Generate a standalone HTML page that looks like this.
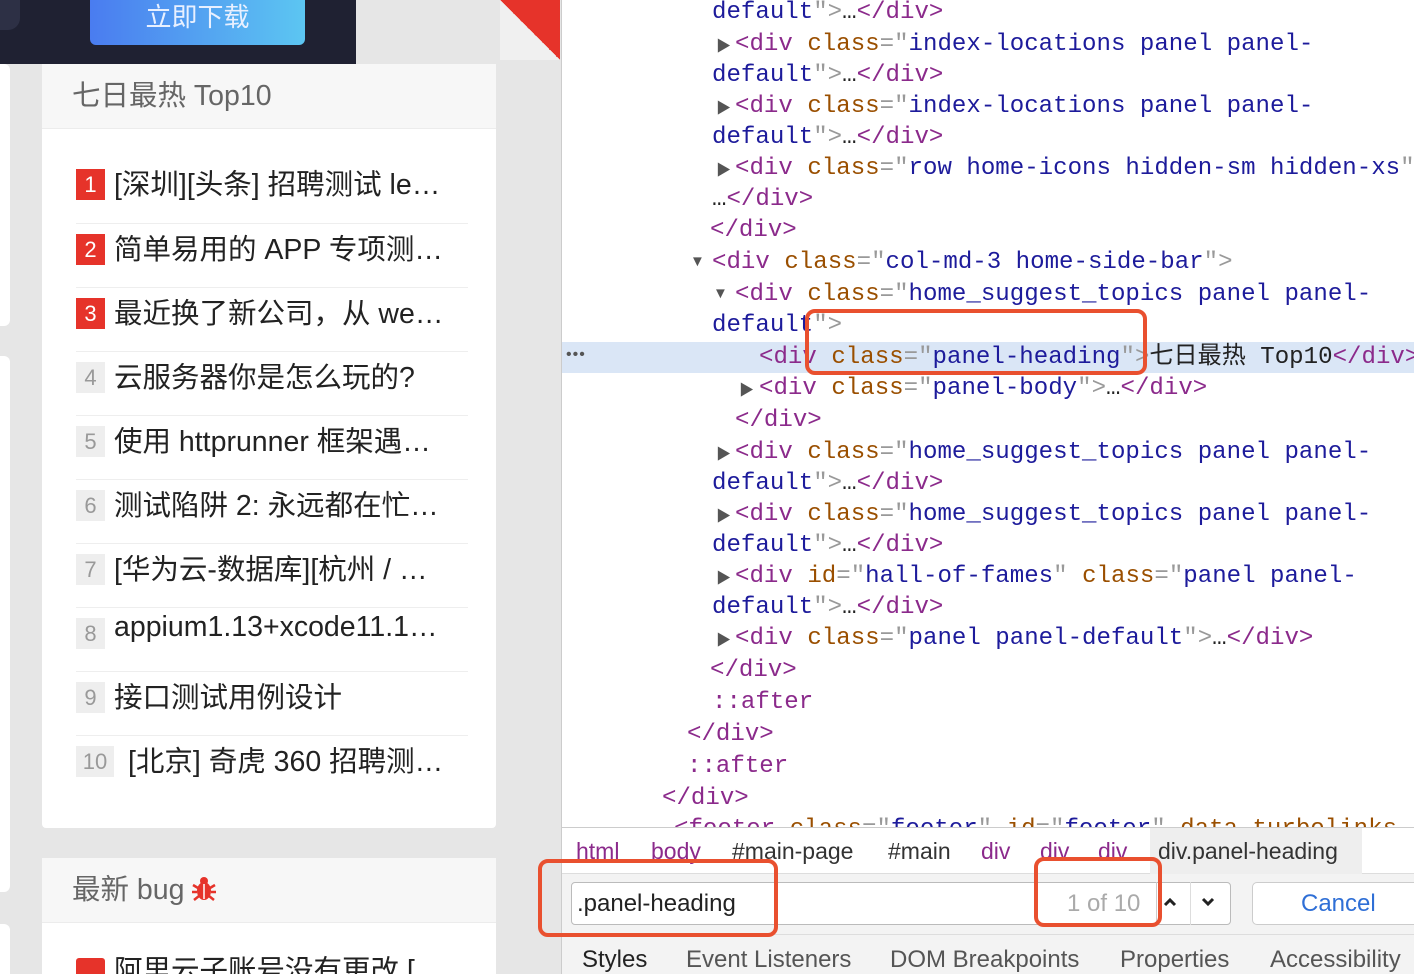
<!DOCTYPE html>
<html style="height:974px;overflow:hidden"><head><meta charset="utf-8"><style>
*{margin:0;padding:0;box-sizing:border-box}
body{width:1414px;height:974px;overflow:hidden;background:#e6e6e6;position:relative;font-family:"Liberation Sans","Noto Sans CJK SC",sans-serif}
.abs{position:absolute}
.top{left:0;top:0;width:356px;height:64px;background:#1f2132}
.btn{left:90px;top:0;width:215px;height:45px;border-radius:0 0 6px 6px;background:linear-gradient(90deg,#4a7cf0,#5cc6f2);color:#e8f0ff;font-size:26px;text-align:center;line-height:34px}
.panel{left:42px;background:#fff;width:454px;border-radius:4px}
.ph{background:#f7f7f7;border-bottom:1px solid #ececec;color:#666;font-size:28.5px;padding-left:30px}
.item{position:absolute;left:34px;width:392px;height:64px;border-top:1px solid #eee;font-size:28.5px;color:#222;white-space:nowrap}
.item .b{position:absolute;left:0;top:10px;width:29px;height:31px;background:#eee;color:#999;font-size:22px;text-align:center;line-height:31px}
.item .b.r{background:#e6332a;color:#fff}
.item .t{position:absolute;left:38px;top:3px}
.dev{left:561px;top:0;width:853px;height:974px;background:#fff;border-left:1px solid #ccc;overflow:hidden}
.code{position:absolute;font-family:"Liberation Mono","Noto Sans CJK SC",monospace;font-size:24.1px;line-height:31px;white-space:pre;color:#222;margin-top:1px}
.tg{color:#8b2a8b}.an{color:#9a4f00}.av{color:#1d1b9b}.p{color:#999}
.tri{position:absolute;font-size:15px;color:#555;margin-top:1px}
.box{position:absolute;border:4px solid #e9502f;border-radius:10px}
</style></head><body>
<div class="abs" style="left:0;top:64px;width:10px;height:262px;background:#fff;border-radius:0 6px 6px 0"></div>
<div class="abs" style="left:0;top:356px;width:10px;height:536px;background:#fff;border-radius:0 6px 6px 0"></div>
<div class="abs" style="left:0;top:924px;width:10px;height:60px;background:#fff;border-radius:0 6px 0 0"></div>
<div class="abs top"></div>
<div class="abs" style="left:0;top:0;width:20px;height:30px;background:#2d3045;border-radius:0 0 12px 0"></div>
<div class="abs btn">立即下载</div>
<div class="abs" style="left:500px;top:0;width:60px;height:60px;background:linear-gradient(225deg,#e6332a 50%,#f0f0f0 50%)"></div>
<div class="abs panel" style="top:64px;height:764px">
<div class="ph" style="height:65px;line-height:64px">七日最热 Top10</div>
<div class="item" style="top:95px;border-top:none"><span class="b r">1</span><span class="t">[深圳][头条] 招聘测试 le…</span></div>
<div class="item" style="top:159px"><span class="b r">2</span><span class="t">简单易用的 APP 专项测…</span></div>
<div class="item" style="top:223px"><span class="b r">3</span><span class="t">最近换了新公司，从 we…</span></div>
<div class="item" style="top:287px"><span class="b">4</span><span class="t">云服务器你是怎么玩的?</span></div>
<div class="item" style="top:351px"><span class="b">5</span><span class="t">使用 httprunner 框架遇…</span></div>
<div class="item" style="top:415px"><span class="b">6</span><span class="t">测试陷阱 2: 永远都在忙…</span></div>
<div class="item" style="top:479px"><span class="b">7</span><span class="t">[华为云-数据库][杭州 / …</span></div>
<div class="item" style="top:543px"><span class="b">8</span><span class="t">appium1.13+xcode11.1…</span></div>
<div class="item" style="top:607px"><span class="b">9</span><span class="t">接口测试用例设计</span></div>
<div class="item" style="top:671px"><span class="b" style="width:38px">10</span><span class="t" style="left:52px">[北京] 奇虎 360 招聘测…</span></div>
</div>
<div class="abs panel" style="top:858px;height:130px">
<div class="ph" style="height:65px;line-height:64px">最新 bug <svg width="24" height="26" viewBox="0 0 24 26" style="vertical-align:-3px"><g fill="#e6332a"><circle cx="12" cy="5" r="4"/><ellipse cx="12" cy="15" rx="7" ry="9"/></g><g stroke="#e6332a" stroke-width="2.5"><path d="M1 9l5 3M23 9l-5 3M0 16h5M24 16h-5M2 24l5-4M22 24l-5-4"/></g><path d="M12 8v15" stroke="#fff" stroke-width="1.5"/></svg></div>
<div class="abs" style="left:34px;top:100px;width:29px;height:31px;background:#e6332a;border-radius:3px"></div>
<div class="abs" style="left:72px;top:90px;font-size:28.5px;color:#222">阿里云子账号没有更改 [</div>
</div>
<div class="abs dev">
<div class="abs" style="left:0;top:342px;width:853px;height:31px;background:#dae6f6"></div>
<div class="abs" style="left:4px;top:346px;font-size:16px;color:#555;letter-spacing:1px">•••</div>
<div class="code" style="left:150px;top:-4px"><span class="av">default</span><span class="p">"&gt;</span>…<span class="tg">&lt;/div&gt;</span></div>
<div class="tri" style="left:154px;top:34px">▶</div>
<div class="code" style="left:173px;top:28px"><span class="tg">&lt;div</span> <span class="an">class</span><span class="p">="</span><span class="av">index-locations panel panel-</span></div>
<div class="code" style="left:150px;top:59px"><span class="av">default</span><span class="p">"&gt;</span>…<span class="tg">&lt;/div&gt;</span></div>
<div class="tri" style="left:154px;top:96px">▶</div>
<div class="code" style="left:173px;top:90px"><span class="tg">&lt;div</span> <span class="an">class</span><span class="p">="</span><span class="av">index-locations panel panel-</span></div>
<div class="code" style="left:150px;top:121px"><span class="av">default</span><span class="p">"&gt;</span>…<span class="tg">&lt;/div&gt;</span></div>
<div class="tri" style="left:154px;top:158px">▶</div>
<div class="code" style="left:173px;top:152px"><span class="tg">&lt;div</span> <span class="an">class</span><span class="p">="</span><span class="av">row home-icons hidden-sm hidden-xs</span><span class="p">"</span></div>
<div class="code" style="left:150px;top:183px">…<span class="tg">&lt;/div&gt;</span></div>
<div class="code" style="left:148px;top:214px"><span class="tg">&lt;/div&gt;</span></div>
<div class="tri" style="left:128px;top:252px">▼</div>
<div class="code" style="left:150px;top:246px"><span class="tg">&lt;div</span> <span class="an">class</span><span class="p">="</span><span class="av">col-md-3 home-side-bar</span><span class="p">"&gt;</span></div>
<div class="tri" style="left:151px;top:284px">▼</div>
<div class="code" style="left:173px;top:278px"><span class="tg">&lt;div</span> <span class="an">class</span><span class="p">="</span><span class="av">home_suggest_topics panel panel-</span></div>
<div class="code" style="left:150px;top:309px"><span class="av">default</span><span class="p">"&gt;</span></div>
<div class="code" style="left:197px;top:341px"><span class="tg">&lt;div</span> <span class="an">class</span><span class="p">="</span><span class="av">panel-heading</span><span class="p">"&gt;</span>七日最热 Top10<span class="tg">&lt;/div&gt;</span></div>
<div class="tri" style="left:177px;top:378px">▶</div>
<div class="code" style="left:197px;top:372px"><span class="tg">&lt;div</span> <span class="an">class</span><span class="p">="</span><span class="av">panel-body</span><span class="p">"&gt;</span>…<span class="tg">&lt;/div&gt;</span></div>
<div class="code" style="left:173px;top:404px"><span class="tg">&lt;/div&gt;</span></div>
<div class="tri" style="left:154px;top:442px">▶</div>
<div class="code" style="left:173px;top:436px"><span class="tg">&lt;div</span> <span class="an">class</span><span class="p">="</span><span class="av">home_suggest_topics panel panel-</span></div>
<div class="code" style="left:150px;top:467px"><span class="av">default</span><span class="p">"&gt;</span>…<span class="tg">&lt;/div&gt;</span></div>
<div class="tri" style="left:154px;top:504px">▶</div>
<div class="code" style="left:173px;top:498px"><span class="tg">&lt;div</span> <span class="an">class</span><span class="p">="</span><span class="av">home_suggest_topics panel panel-</span></div>
<div class="code" style="left:150px;top:529px"><span class="av">default</span><span class="p">"&gt;</span>…<span class="tg">&lt;/div&gt;</span></div>
<div class="tri" style="left:154px;top:566px">▶</div>
<div class="code" style="left:173px;top:560px"><span class="tg">&lt;div</span> <span class="an">id</span><span class="p">="</span><span class="av">hall-of-fames</span><span class="p">"</span> <span class="an">class</span><span class="p">="</span><span class="av">panel panel-</span></div>
<div class="code" style="left:150px;top:591px"><span class="av">default</span><span class="p">"&gt;</span>…<span class="tg">&lt;/div&gt;</span></div>
<div class="tri" style="left:154px;top:628px">▶</div>
<div class="code" style="left:173px;top:622px"><span class="tg">&lt;div</span> <span class="an">class</span><span class="p">="</span><span class="av">panel panel-default</span><span class="p">"&gt;</span>…<span class="tg">&lt;/div&gt;</span></div>
<div class="code" style="left:148px;top:654px"><span class="tg">&lt;/div&gt;</span></div>
<div class="code" style="left:150px;top:686px"><span class="tg">::after</span></div>
<div class="code" style="left:125px;top:718px"><span class="tg">&lt;/div&gt;</span></div>
<div class="code" style="left:125px;top:750px"><span class="tg">::after</span></div>
<div class="code" style="left:100px;top:782px"><span class="tg">&lt;/div&gt;</span></div>
<div class="code" style="left:112px;top:813px"><span class="tg">&lt;footer</span> <span class="an">class</span><span class="p">="</span><span class="av">footer</span><span class="p">"</span> <span class="an">id</span><span class="p">="</span><span class="av">footer</span><span class="p">"</span> <span class="an">data-turbolinks</span></div>
<div class="abs" style="left:0;top:827px;width:853px;height:147px;background:#f3f3f3;border-top:1px solid #ccc"></div>
<div class="abs" style="left:0;top:828px;width:853px;height:46px;background:#fff;border-bottom:1px solid #ddd;font-size:23px;line-height:46px;white-space:nowrap;color:#333">
<span style="position:absolute;left:14px;color:#8b2a8b">html</span>
<span style="position:absolute;left:89px;color:#8b2a8b">body</span>
<span style="position:absolute;left:170px">#main-page</span>
<span style="position:absolute;left:326px">#main</span>
<span style="position:absolute;left:419px;color:#8b2a8b">div</span>
<span style="position:absolute;left:478px;color:#8b2a8b">div</span>
<span style="position:absolute;left:536px;color:#8b2a8b">div</span>
<span style="position:absolute;left:588px;width:212px;height:46px;padding-left:8px;background:#eee">div.panel-heading</span>
</div>
<div class="abs" style="left:9px;top:882px;width:660px;height:43px;background:#fff;border:1px solid #bbb;border-radius:4px"></div>
<div class="abs" style="left:15px;top:890px;font-size:24px;color:#222">.panel-heading</div>
<div class="abs" style="left:505px;top:890px;font-size:24px;color:#aaa">1 of 10</div>
<div class="abs" style="left:594px;top:882px;width:1px;height:43px;background:#ccc"></div>
<div class="abs" style="left:628px;top:882px;width:1px;height:43px;background:#ddd"></div>
<svg class="abs" style="left:600px;top:895px" width="16" height="14" viewBox="0 0 16 14"><path d="M3 10l5-5 5 5" fill="none" stroke="#222" stroke-width="3"/></svg>
<svg class="abs" style="left:638px;top:895px" width="16" height="14" viewBox="0 0 16 14"><path d="M3 4l5 5 5-5" fill="none" stroke="#222" stroke-width="3"/></svg>
<div class="abs" style="left:690px;top:882px;width:180px;height:43px;background:#fff;border:1px solid #ccc;border-radius:5px;font-size:24px;color:#2f6fd6;line-height:41px;padding-left:48px">Cancel</div>
<div class="abs" style="left:0;top:934px;width:853px;height:1px;background:#ddd"></div>
<div class="abs" style="left:0;top:946px;font-size:24px;color:#555;white-space:nowrap;width:900px">
<span style="position:absolute;left:20px;color:#222">Styles</span>
<span style="position:absolute;left:124px">Event Listeners</span>
<span style="position:absolute;left:328px">DOM Breakpoints</span>
<span style="position:absolute;left:558px">Properties</span>
<span style="position:absolute;left:708px">Accessibility</span>
</div>
</div>
<div class="box" style="left:805px;top:309px;width:342px;height:66px"></div>
<div class="box" style="left:538px;top:859px;width:240px;height:78px"></div>
<div class="box" style="left:1034px;top:857px;width:128px;height:70px"></div>
</body></html>
